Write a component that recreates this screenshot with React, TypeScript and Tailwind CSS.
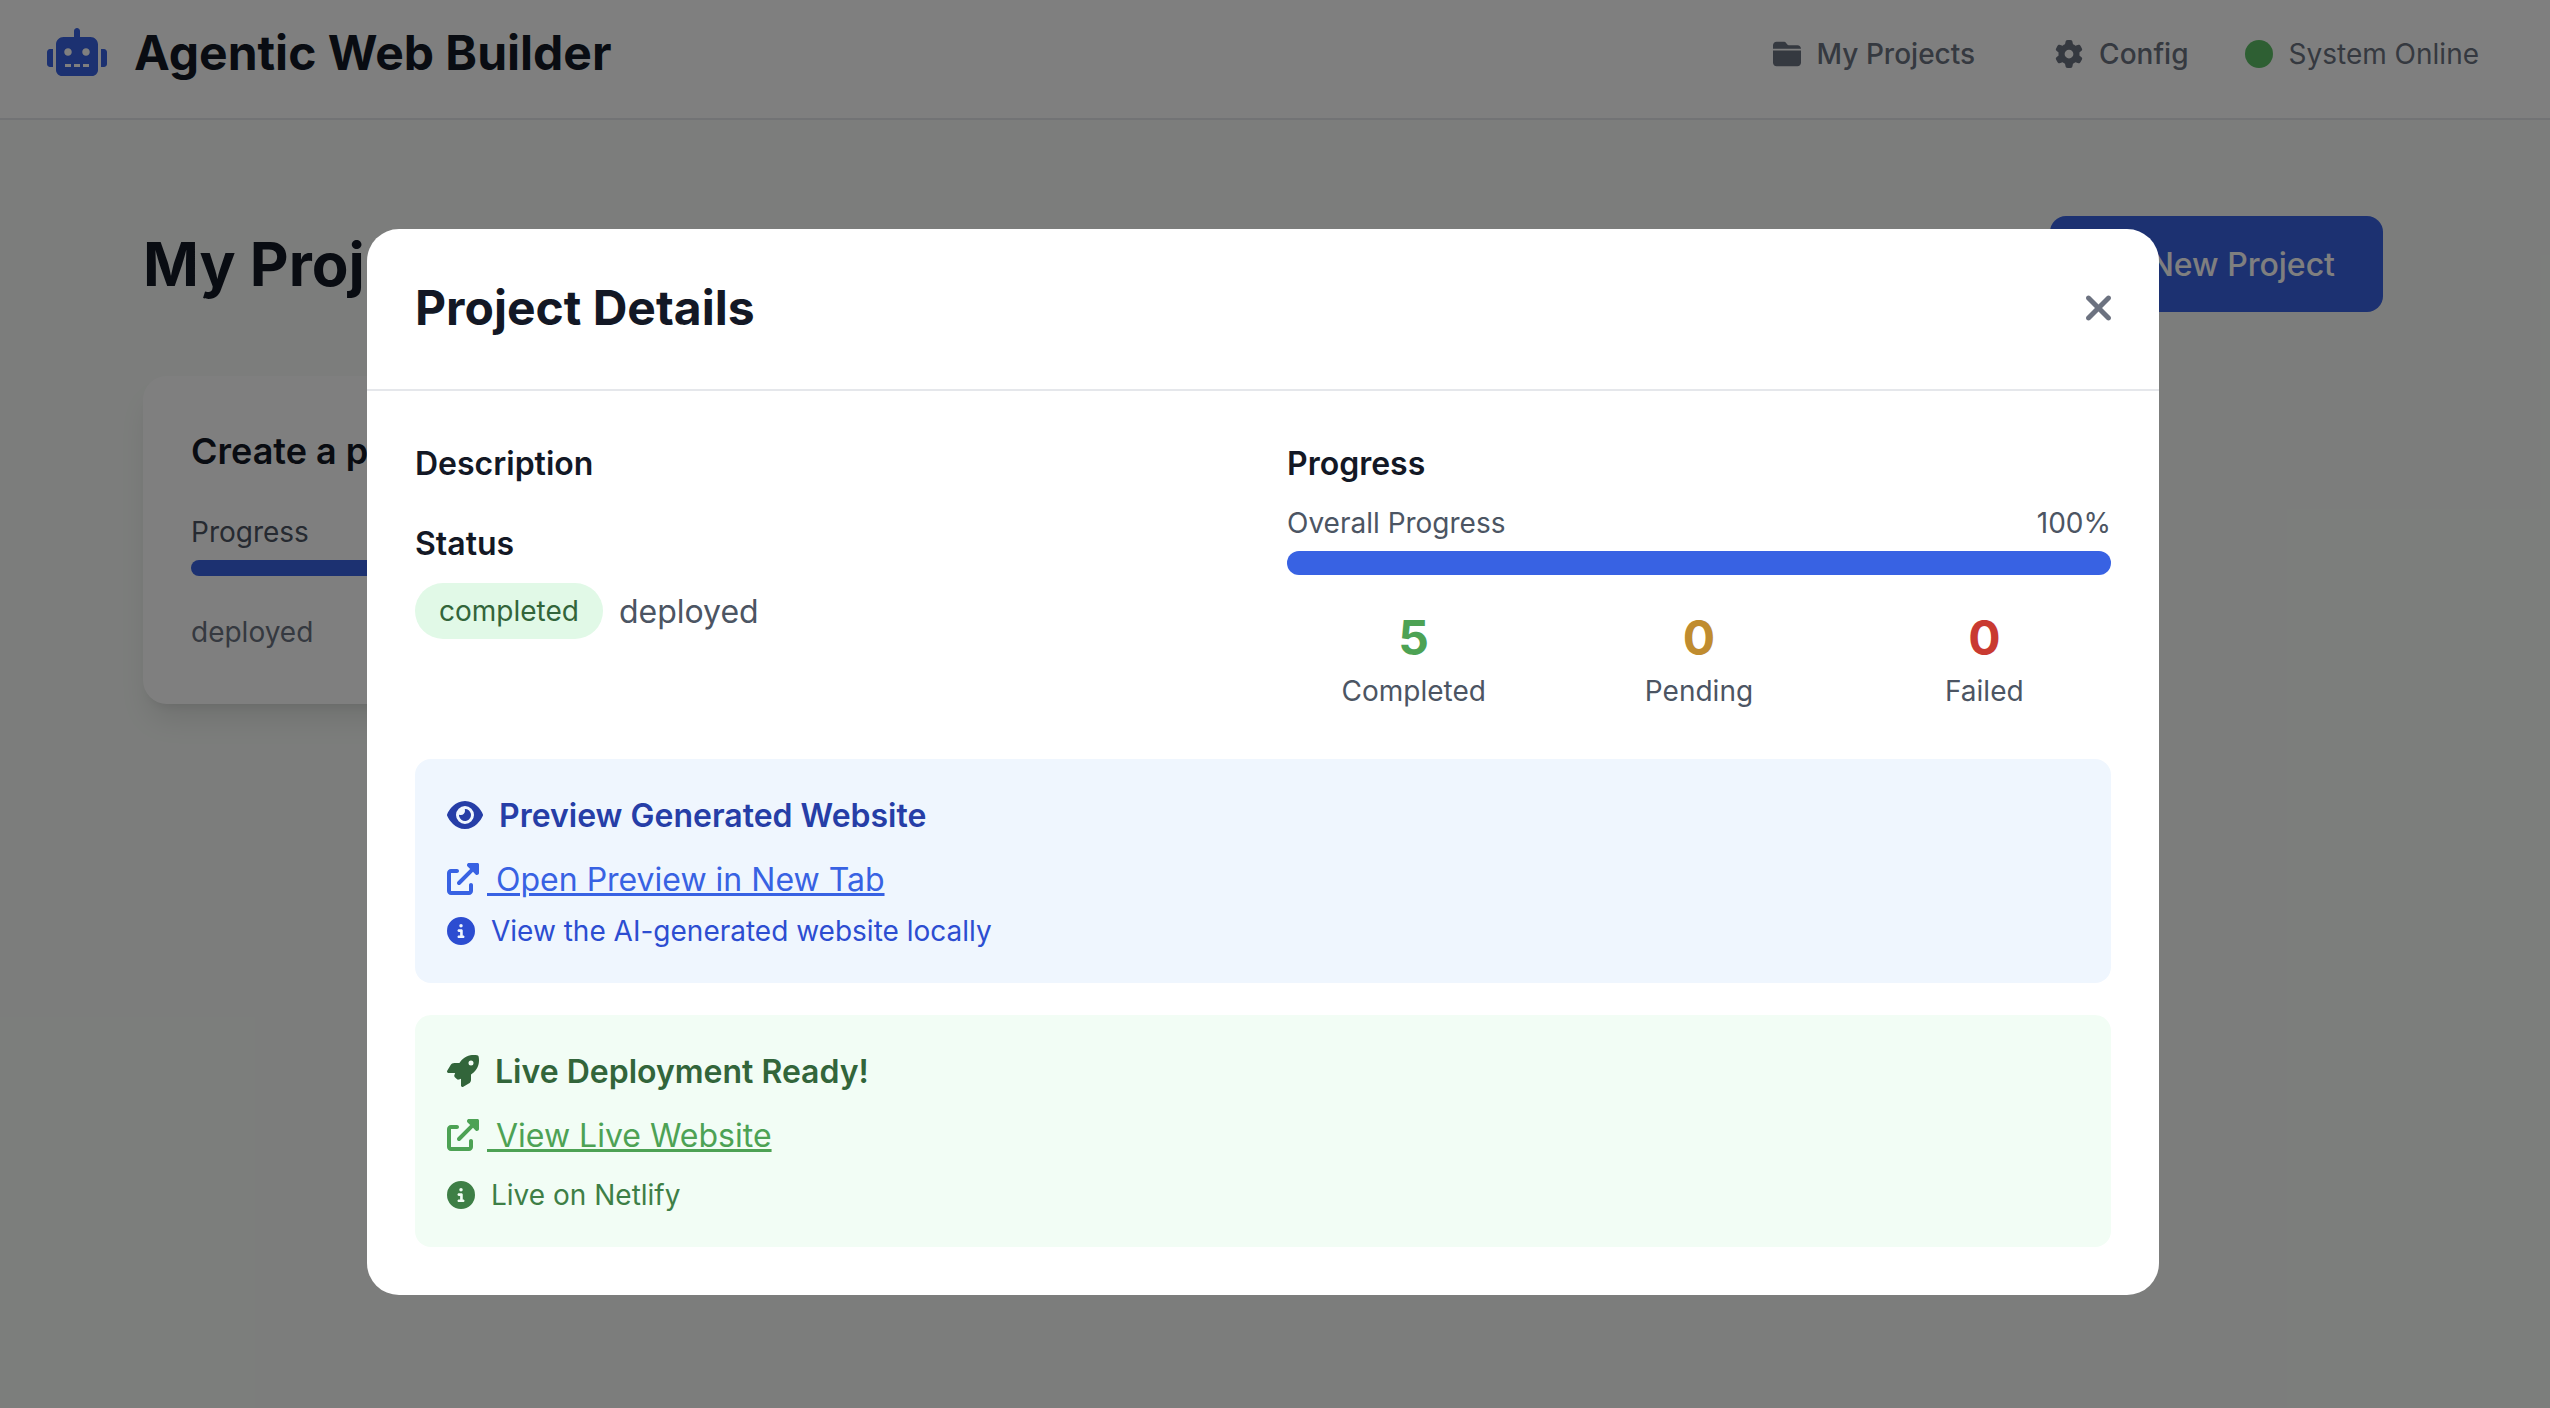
import React from "react";
import { FaFolderClosed, FaGear, FaEye, FaCircleInfo, FaRocket, FaPlus } from "react-icons/fa6";

function RobotIcon() {
  return (
    <svg viewBox="0 0 640 512" className="h-12 w-[60px] fill-[#3862e3]">
      <path d="M9.375 233.4C3.375 239.4 0 247.5 0 256v128c0 8.5 3.375 16.62 9.375 22.62S23.5 416 32 416h32V224H32C23.5 224 15.38 227.4 9.375 233.4zM464 96H352V32c0-17.62-14.38-32-32-32S288 14.38 288 32v64H176C131.8 96 96 131.8 96 176V448c0 35.38 28.62 64 64 64h320c35.38 0 64-28.62 64-64V176C544 131.8 508.3 96 464 96zM256 416H192v-32h64V416zM224 296C201.9 296 184 278.1 184 256S201.9 216 224 216S264 233.9 264 256S246.1 296 224 296zM352 416H288v-32h64V416zM448 416h-64v-32h64V416zM416 296c-22.12 0-40-17.88-40-40S393.9 216 416 216S456 233.9 456 256S438.1 296 416 296zM630.6 233.4C624.6 227.4 616.5 224 608 224h-32v192h32c8.5 0 16.62-3.375 22.62-9.375S640 392.5 640 384V256C640 247.5 636.6 239.4 630.6 233.4z" />
    </svg>
  );
}

function CloseIcon() {
  return (
    <svg viewBox="0 0 320 512" className="-mt-0.5 h-10 w-[25px] fill-[#6c7280]">
      <path d="M310.6 361.4c12.5 12.5 12.5 32.75 0 45.25C304.4 412.9 296.2 416 288 416s-16.38-3.125-22.62-9.375L160 301.3L54.63 406.6C48.38 412.9 40.19 416 32 416S15.63 412.9 9.375 406.6c-12.5-12.5-12.5-32.75 0-45.25l105.4-105.4L9.375 150.6c-12.5-12.5-12.5-32.75 0-45.25s32.75-12.5 45.25 0L160 210.8l105.4-105.4c12.5-12.5 32.75-12.5 45.25 0s12.5 32.75 0 45.25l-105.4 105.4L310.6 361.4z" />
    </svg>
  );
}

function ExternalLinkIcon() {
  return (
    <svg viewBox="0 0 512 512" className="size-8 fill-current">
      <path d="M384 320c-17.67 0-32 14.33-32 32v96H64V160h96c17.67 0 32-14.32 32-32s-14.33-32-32-32L64 96c-35.35 0-64 28.65-64 64V448c0 35.34 28.65 64 64 64h288c35.35 0 64-28.66 64-64v-96C416 334.3 401.7 320 384 320zM488 0H352c-12.94 0-24.62 7.797-29.56 19.75c-4.969 11.97-2.219 25.72 6.938 34.88L370.8 96L169.4 297.4c-12.5 12.5-12.5 32.75 0 45.25C175.6 348.9 183.8 352 192 352s16.38-3.125 22.62-9.375L416 141.3l41.38 41.38c9.156 9.141 22.88 11.84 34.88 6.938C504.2 184.6 512 172.9 512 160V24C512 10.74 501.3 0 488 0z" />
    </svg>
  );
}

function Header() {
  return (
    <header className="flex h-[120px] items-start justify-between border-b-2 border-[#e5e7eb] bg-white pl-[47px] pr-[71px] pt-5">
      <div className="flex h-16 items-center">
        <RobotIcon />
        <h1 className="ml-[27px] pt-0.5 text-[48px] font-bold leading-[64px] text-[#131825]">Agentic Web Builder</h1>
      </div>
      <div className="flex h-[68px] items-center text-[28px] leading-10 text-[#6b7280]">
        <a className="flex items-center gap-4 font-medium">
          <FaFolderClosed className="-mt-px size-7" />
          My Projects
        </a>
        <a className="ml-20 flex items-center gap-4 font-medium">
          <FaGear className="-mt-px size-7" />
          Config
        </a>
        <div className="ml-14 flex items-center gap-4">
          <span className="-mt-px size-7 rounded-full bg-[#5dbf66]" />
          System Online
        </div>
      </div>
    </header>
  );
}

function ProjectCard() {
  return (
    <div className="h-[328px] w-[704px] rounded-3xl bg-white px-12 pb-12 pt-[47px] shadow-[0_20px_30px_-6px_rgba(0,0,0,0.1),0_8px_12px_-8px_rgba(0,0,0,0.1)]">
      <h3 className="mb-[33px] text-[36px] font-semibold leading-[56px] text-[#131825]">Create a project</h3>
      <div className="mb-2 flex justify-between text-[28px] leading-10 text-[#4c5563]">
        <span>Progress</span>
        <span>100%</span>
      </div>
      <div className="mb-8 h-4 rounded-full bg-[#3862e3]" />
      <div className="flex h-12 items-center text-[28px] leading-10 text-[#6b7280]">deployed</div>
    </div>
  );
}

function Stat({ value, label, color }: { value: number; label: string; color: string }) {
  return (
    <div>
      <div className={`-mt-px mb-px text-[48px] font-bold leading-[64px] ${color}`}>{value}</div>
      <div className="text-[28px] leading-10 text-[#4c5563]">{label}</div>
    </div>
  );
}

function SectionTitle({ children }: { children: React.ReactNode }) {
  return <h3 className="h-12 pt-px text-[32px] font-semibold leading-[48px] text-[#131825]">{children}</h3>;
}

function ProjectModal() {
  return (
    <div className="h-[1066px] w-[1792px] rounded-[32px] bg-white">
      <div className="flex items-center justify-between border-b-2 border-[#e5e7eb] p-12">
        <h2 className="-mt-px mb-px text-[48px] font-bold leading-[64px] text-[#131825]">Project Details</h2>
        <button>
          <CloseIcon />
        </button>
      </div>
      <div className="p-12">
        <div className="grid grid-cols-2 gap-12">
          <div>
            <SectionTitle>Description</SectionTitle>
            <div className="h-8" />
            <SectionTitle>Status</SectionTitle>
            <div className="mt-4 flex items-center gap-4">
              <span className="rounded-full bg-[#e1f9e7] px-6 py-2 text-[28px] leading-10 text-[#32653a]">completed</span>
              <span className="pt-0.5 text-[32px] leading-[48px] text-[#4c5563]">deployed</span>
            </div>
          </div>
          <div>
            <SectionTitle>Progress</SectionTitle>
            <div className="mb-2 mt-4 flex justify-between text-[28px] leading-10 text-[#4c5563]">
              <span>Overall Progress</span>
              <span>100%</span>
            </div>
            <div className="mb-8 h-6 rounded-full bg-[#3862e3]" />
            <div className="grid grid-cols-3 gap-8 text-center">
              <Stat value={5} label="Completed" color="text-[#4da254]" />
              <Stat value={0} label="Pending" color="text-[#c08c2f]" />
              <Stat value={0} label="Failed" color="text-[#c93a31]" />
            </div>
          </div>
        </div>
        <section className="mt-12 rounded-2xl bg-[#eff6fe] p-8">
          <h4 className="flex h-12 items-center gap-4 text-[32px] font-semibold leading-[48px] text-[#263ea7]">
            <FaEye className="h-8 w-9" />
            <span className="pt-0.5">Preview Generated Website</span>
          </h4>
          <a className="mt-4 flex h-12 items-center gap-2 text-[32px] leading-[48px] text-[#3862e3]">
            <ExternalLinkIcon />
            <span className="pt-0.5 underline">{"\u00a0"}Open Preview in New Tab</span>
          </a>
          <p className="mt-2 flex items-center gap-4 text-[28px] leading-10 text-[#2c4dd1]">
            <FaCircleInfo className="-mt-px size-7" />
            View the AI-generated website locally
          </p>
        </section>
        <section className="mt-8 rounded-2xl bg-[#f2fdf5] p-8">
          <h4 className="flex h-12 items-center gap-4 text-[32px] font-semibold leading-[48px] text-[#32653a]">
            <FaRocket className="size-8" />
            <span className="pt-0.5">Live Deployment Ready!</span>
          </h4>
          <a className="mt-4 flex h-12 items-center gap-2 text-[32px] leading-[48px] text-[#4da254]">
            <ExternalLinkIcon />
            <span className="pt-0.5 underline">{"\u00a0"}View Live Website</span>
          </a>
          <p className="mt-4 flex items-center gap-4 text-[28px] leading-10 text-[#3e7f46]">
            <FaCircleInfo className="-mt-px size-7" />
            Live on Netlify
          </p>
        </section>
      </div>
    </div>
  );
}

export default function App() {
  return (
    <div className="relative h-[1408px] w-[2550px] overflow-hidden bg-[#f8fbf8] font-['Inter',sans-serif]">
      <Header />
      <main className="ml-[143px] w-[2240px] pt-24">
        <div className="mb-16 flex h-24 items-center justify-between">
          <h2 className="text-[60px] font-bold leading-[72px] text-[#131825]">My Projects</h2>
          <button className="flex h-24 w-[333px] items-center justify-end gap-4 rounded-2xl bg-[#3862e3] px-12 text-[32px] font-medium leading-[48px] text-white">
            <FaPlus className="h-8 w-7" />
            <span className="pt-0.5">New Project</span>
          </button>
        </div>
        <ProjectCard />
      </main>
      <div className="absolute inset-0 flex items-start justify-center bg-black/50 pr-6 pt-[229px]">
        <ProjectModal />
      </div>
    </div>
  );
}
